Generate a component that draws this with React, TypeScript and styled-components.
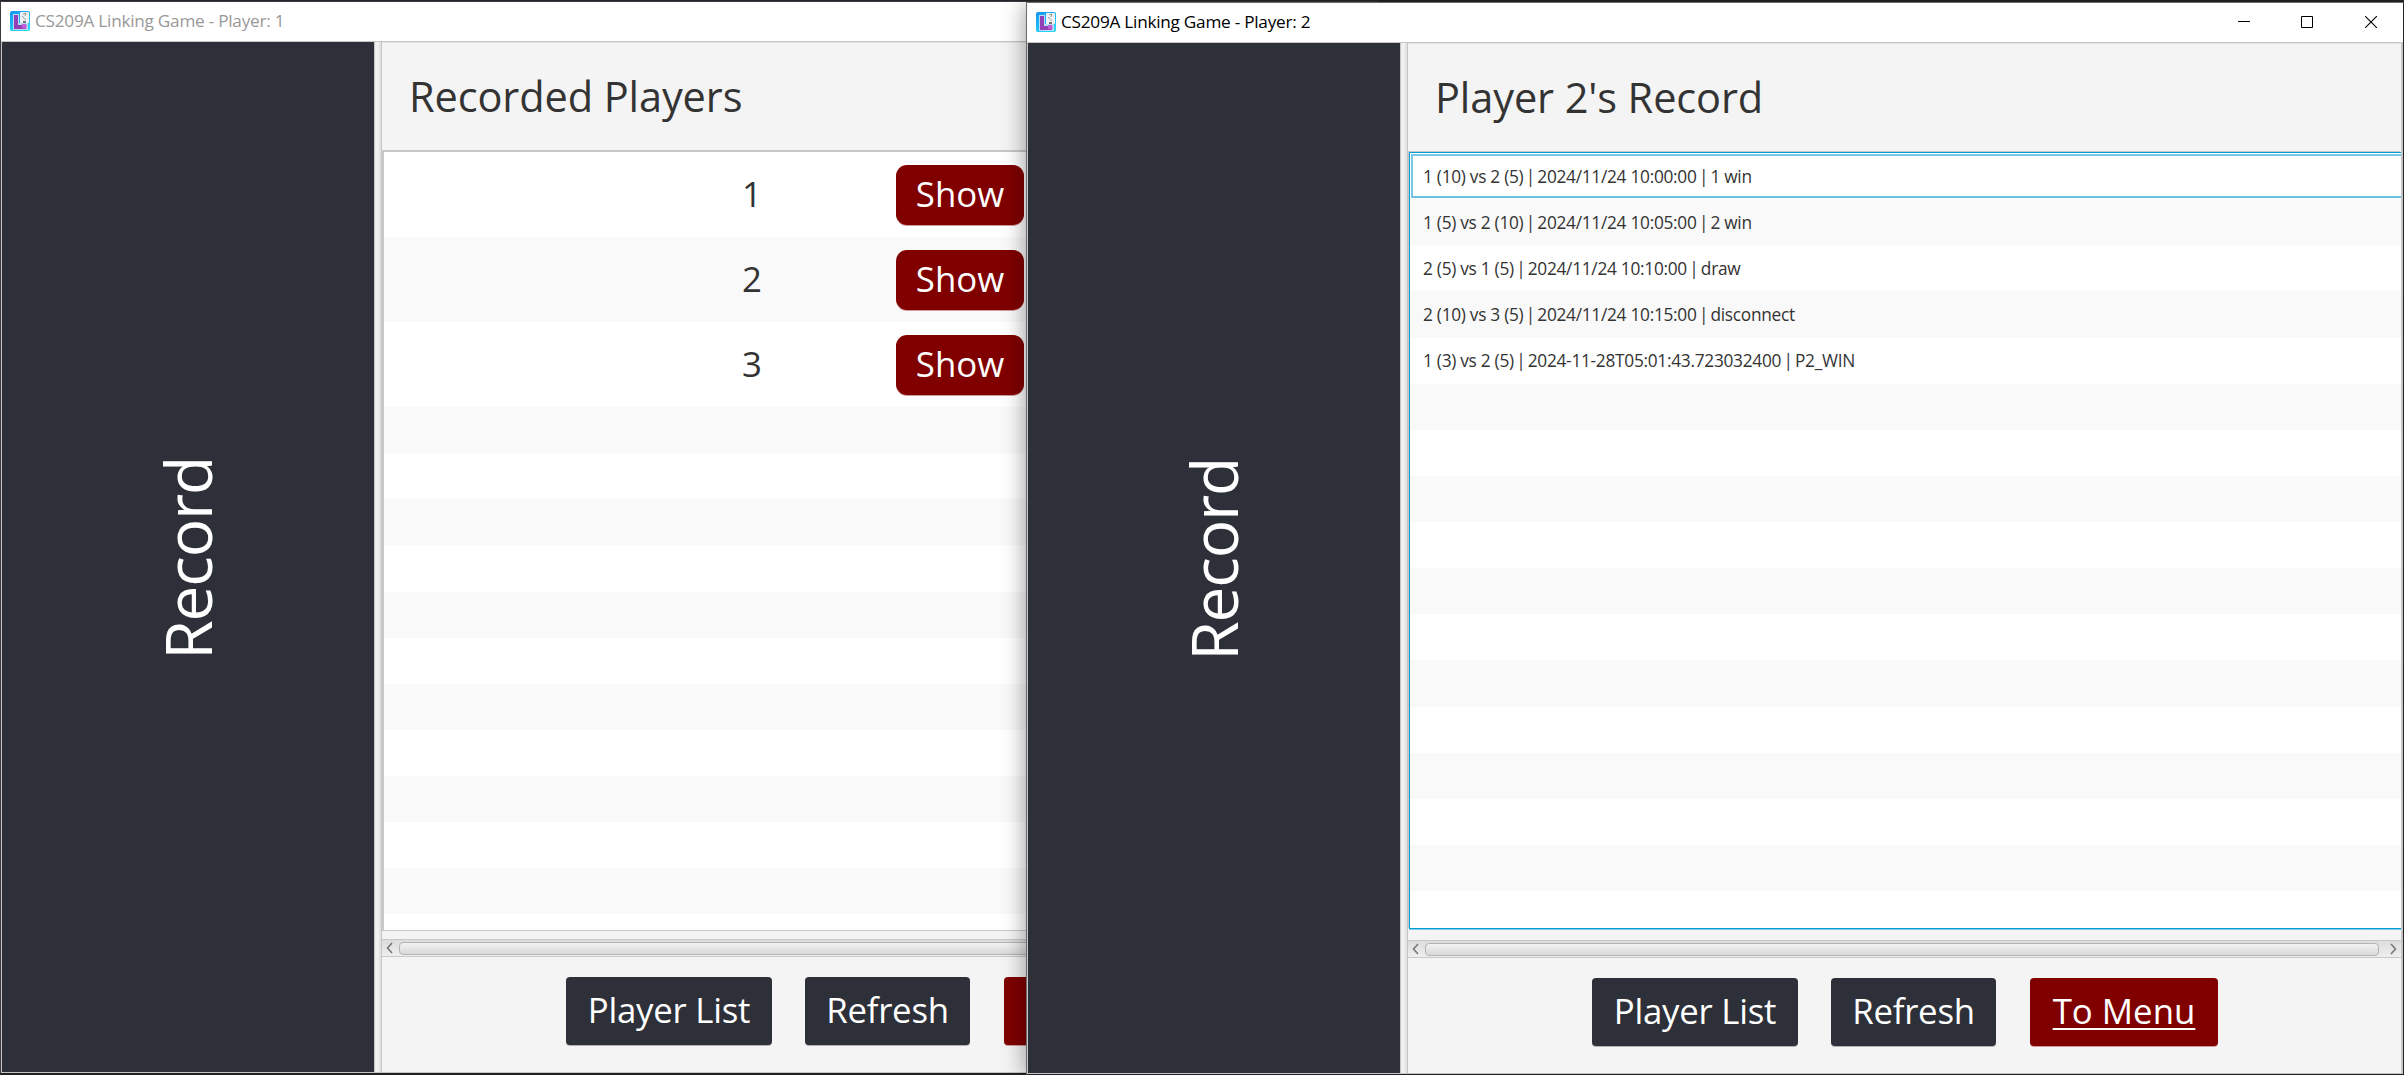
import React from "react";
import styled, { createGlobalStyle, css } from "styled-components";

const GlobalStyle = createGlobalStyle`
  * { box-sizing: border-box; }
  html, body { margin: 0; padding: 0; overflow: hidden; }
  body { font-family: "Open Sans", "Noto Sans", sans-serif; background: #26242a; }
`;

const Desktop = styled.div`
  position: relative;
  width: 2404px;
  height: 1075px;
  overflow: hidden;
  background: #26242a;
`;

const Window = styled.section<{ $left: number; $top: number; $active?: boolean }>`
  position: absolute;
  left: ${(p) => p.$left}px;
  top: ${(p) => p.$top}px;
  width: 1378px;
  height: 1073px;
  display: flex;
  flex-direction: column;
  border: 1px solid ${(p) => (p.$active ? "#6b6b6b" : "#3c3a40")};
  border-right-color: #242427;
  border-bottom-color: #1f1e22;
  background: #fff;
  box-shadow: ${(p) => (p.$active ? "0 2px 22px rgba(0, 0, 0, 0.42)" : "none")};
`;

const TitleBar = styled.header<{ $active?: boolean }>`
  height: 40px;
  flex: none;
  display: flex;
  align-items: center;
  padding: 0 0 1px 9px;
  border-bottom: 1px solid #c6c6c6;
  color: ${(p) => (p.$active ? "#000" : "#999")};
`;

const Title = styled.span`
  flex: 1;
  margin-left: 5px;
  padding-bottom: 1px;
  font-size: 17.2px;
  line-height: 23px;
  letter-spacing: -0.25px;
  white-space: pre;
`;

const Caption = styled.div`
  display: flex;
  align-items: center;
  gap: 52px;
  padding-right: 26px;

  svg:first-child {
    margin-right: -1px;
  }
`;

const Body = styled.div`
  flex: 1;
  min-height: 0;
  display: flex;
  border: solid #c6c6c6;
  border-width: 0 2px 1px 1px;
`;

const Sidebar = styled.aside`
  width: 372px;
  flex: none;
  display: flex;
  align-items: center;
  justify-content: center;
  padding-top: 2px;
  background: #2d3039;
`;

const SidebarLabel = styled.span`
  writing-mode: vertical-rl;
  transform: rotate(180deg);
  color: #fff;
  font-size: 64px;
  line-height: 86px;
  letter-spacing: -1.2px;
`;

const Divider = styled.div`
  width: 8px;
  flex: none;
  border: solid #c6c6c6;
  border-width: 0 1px;
  background: linear-gradient(90deg, #ededed, #f4f4f4 35%, #dedede);
`;

const Pane = styled.main`
  flex: 1;
  min-width: 0;
  display: flex;
  flex-direction: column;
  background: #f4f4f4;
`;

const Heading = styled.h1`
  margin: 0;
  height: 108px;
  flex: none;
  padding: 23px 0 0 27px;
  border-top: 1px solid #e4e4e4;
  color: #333;
  font-size: 41.5px;
  font-weight: 400;
  line-height: 60px;
  letter-spacing: -0.1px;
  white-space: pre;
`;

const List = styled.div<{ $focused?: boolean }>`
  flex: none;
  overflow: hidden;
  display: flex;
  flex-direction: column;
  background: #fff;
  ${(p) =>
    p.$focused
      ? css`
          height: 777px;
          margin: 1px 0 3px 1px;
          border: solid #039ed3;
          border-width: 1px 0 1px 1px;
          box-shadow: -1px -1px 0 #c8c8c8, 0 1px 0 #7fcdea;
        `
      : css`
          height: 781px;
          border: solid #c8c8c8;
          border-width: 2px 0 1px 2px;
        `}
`;

const rowShade = css<{ $odd?: boolean }>`
  flex: none;
  background: ${(p) => (p.$odd ? "#f9f9f9" : "#fff")};
`;

const PlayerRow = styled.div<{ $odd?: boolean }>`
  ${rowShade}
  height: 85px;
  display: flex;
  align-items: center;
  gap: 79px;
  padding-left: 303px;
`;

const PlayerId = styled.span`
  width: 130px;
  padding-bottom: 2px;
  text-align: center;
  color: #333;
  font-size: 34.8px;
  line-height: 50px;
`;

const RecordRow = styled.div<{ $odd?: boolean; $selected?: boolean }>`
  ${rowShade}
  height: 46.125px;
  display: flex;
  align-items: center;
  padding-left: 13px;
  color: #333;
  font-size: 17.3px;
  letter-spacing: -0.28px;
  white-space: pre;
  ${(p) =>
    p.$selected &&
    css`
      box-shadow: inset 1px 1px 0 #fff, inset 0 -1px 0 #fff, inset 3px 3px 0 #76c8e6,
        inset 0 -3px 0 #6cc0e0;
    `}
`;

const Bar = styled.span`
  margin: 0 -1.9px;
`;

const Button = styled.button<{ $tone: "dark" | "red"; $w: number; $small?: boolean; $line?: boolean }>`
  width: ${(p) => p.$w}px;
  height: ${(p) => (p.$small ? 60 : 68)}px;
  flex: none;
  padding: 0 0 2px;
  border: 0;
  border-radius: ${(p) => (p.$small ? 11 : 4)}px;
  background: ${(p) => (p.$tone === "red" ? "#800000" : "#2d3039")};
  box-shadow: 0 1px 0 ${(p) => (p.$tone === "red" ? "#cf9c9c" : "#b0b0b2")};
  color: #fff;
  font-family: inherit;
  font-size: 34.8px;
  line-height: 50px;
  letter-spacing: ${(p) => (p.$tone === "red" ? 0 : -0.25)}px;
  text-decoration: ${(p) => (p.$line ? "underline" : "none")};
  text-decoration-thickness: 2px;
  text-underline-offset: 4px;
  white-space: pre;
`;

const ScrollBar = styled.div`
  height: 18px;
  flex: none;
  margin-top: 8px;
  display: flex;
  align-items: center;
  padding: 0 4px;
  border: solid #c8c8c8;
  border-width: 1px 0;
  background: linear-gradient(#dcdcdc, #efefef);
`;

const Thumb = styled.div`
  flex: 1;
  height: 13px;
  margin: 0 11px 0 6px;
  border: 1px solid #b4b4b4;
  border-radius: 4px;
  background: linear-gradient(#f2f2f2, #d9d9d9);
`;

const Footer = styled.footer`
  flex: 1;
  display: flex;
  justify-content: center;
  gap: 33px;
  padding: 20px 0 0 1px;

  button:last-child {
    margin-left: 1px;
  }
`;

const AppIcon = () => (
  <svg width="20" height="20" viewBox="0 0 20 20">
    <defs>
      <linearGradient id="sky" x1="0" y1="0" x2="0.6" y2="1">
        <stop offset="0" stopColor="#1295ee" />
        <stop offset="1" stopColor="#25d5f8" />
      </linearGradient>
    </defs>
    <rect width="20" height="20" rx="2" fill="url(#sky)" />
    <path d="M3 3h6v9h9v7H3z" fill="#b9dcf6" />
    <rect x="10" y="1" width="9" height="11" rx="1" fill="#eef1f4" />
    <path d="M13 3l3-1-1 3M12 5l2 2M15 7v2" stroke="#999" strokeWidth="1" fill="none" />
    <path d="M13 11h3" stroke="#222" strokeWidth="1.2" />
    <path d="M4 4h4v10h8v4H4z" fill="#9340b8" />
    <rect x="12" y="13" width="4.5" height="4.5" rx="1" fill="#c25bd6" />
  </svg>
);

const Chevron = ({ right }: { right?: boolean }) => (
  <svg width="7" height="12" viewBox="0 0 7 12">
    <path d={right ? "M1 1l4.500 5L1 11" : "M6 1L1.500 6L6 11"} fill="none" stroke="#777" strokeWidth="1.6" />
  </svg>
);

const CaptionButtons = () => (
  <Caption>
    <svg width="12" height="12" viewBox="0 0 12 12"><path d="M0 5.500h12" stroke="#000" /></svg>
    <svg width="12" height="12" viewBox="0 0 12 12"><path d="M.5.5h11v11H.5z" fill="none" stroke="#000" /></svg>
    <svg width="12" height="12" viewBox="0 0 12 12"><path d="M0 0l12 12M12 0L0 12" stroke="#000" strokeWidth="1.1" /></svg>
  </Caption>
);

type FrameProps = {
  left: number;
  top: number;
  player: number;
  heading: string;
  active?: boolean;
  children: React.ReactNode;
};

const GameWindow = ({ left, top, player, heading, active, children }: FrameProps) => (
  <Window $left={left} $top={top} $active={active}>
    <TitleBar $active={active}>
      <AppIcon />
      <Title>{`CS209A Linking Game - Player: ${player}`}</Title>
      {active && <CaptionButtons />}
    </TitleBar>
    <Body>
      <Sidebar>
        <SidebarLabel>Record</SidebarLabel>
      </Sidebar>
      <Divider />
      <Pane>
        <Heading>{heading}</Heading>
        <List $focused={active}>{children}</List>
        <ScrollBar>
          <Chevron />
          <Thumb />
          <Chevron right />
        </ScrollBar>
        <Footer>
          <Button $tone="dark" $w={206}>Player List</Button>
          <Button $tone="dark" $w={165}>Refresh</Button>
          <Button $tone="red" $w={188} $line={active}>{active ? "To Menu" : ""}</Button>
        </Footer>
      </Pane>
    </Body>
  </Window>
);

const players = ["1", "2", "3"];
const records = [
  ["1 (10) vs 2 (5)", "2024/11/24 10:00:00", "1 win"],
  ["1 (5) vs 2 (10)", "2024/11/24 10:05:00", "2 win"],
  ["2 (5) vs 1 (5)", "2024/11/24 10:10:00", "draw"],
  ["2 (10) vs 3 (5)", "2024/11/24 10:15:00", "disconnect"],
  ["1 (3) vs 2 (5)", "2024-11-28T05:01:43.723032400", "P2_WIN"],
];
const fillers = Array.from({ length: 12 }, (_, i) => i);

export default function App() {
  return (
    <Desktop>
      <GlobalStyle />
      <GameWindow left={0} top={1} player={1} heading="Recorded Players">
        {players.map((id, i) => (
          <PlayerRow key={id} $odd={i % 2 === 1}>
            <PlayerId>{id}</PlayerId>
            <Button $tone="red" $w={128} $small>Show</Button>
          </PlayerRow>
        ))}
        {fillers.map((i) => (
          <RecordRow key={i} $odd={i % 2 === 0} />
        ))}
      </GameWindow>
      <GameWindow left={1026} top={2} player={2} heading="Player 2's Record" active>
        {records.map(([match, time, result], i) => (
          <RecordRow key={time} $odd={i % 2 === 1} $selected={i === 0}>
            <span>
              {match} <Bar>|</Bar> {time} <Bar>|</Bar> {result}
            </span>
          </RecordRow>
        ))}
        {fillers.map((i) => (
          <RecordRow key={i} $odd={i % 2 === 0} />
        ))}
      </GameWindow>
    </Desktop>
  );
}
